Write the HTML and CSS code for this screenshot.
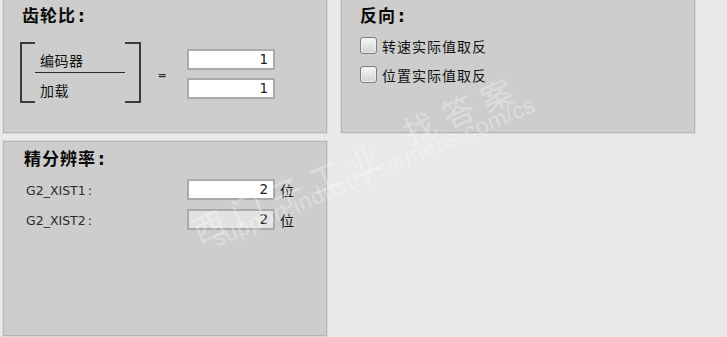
FILE: index.html
```html
<!DOCTYPE html>
<html lang="zh-CN">
<head>
<meta charset="utf-8">
<title>齿轮比</title>
<link rel="stylesheet" href="styles.css">
</head>
<body>
<div class="page">
  <section class="panel panel-top gear">
    <div class="title">齿轮比<span class="colon">:</span></div>
    <div class="ratio">
      <div class="br br-left"></div>
      <div class="frac">
        <div class="num-label">编码器</div>
        <div class="frac-line"></div>
        <div class="den-label">加载</div>
      </div>
      <div class="br br-right"></div>
      <div class="eq">=</div>
      <div class="fields">
        <div class="field">1</div>
        <div class="field">1</div>
      </div>
    </div>
  </section>

  <section class="panel panel-top invert">
    <div class="title">反向<span class="colon">:</span></div>
    <div class="checks">
      <label class="check"><span class="box"></span><span class="check-text">转速实际值取反</span></label>
      <label class="check"><span class="box"></span><span class="check-text">位置实际值取反</span></label>
    </div>
  </section>

  <section class="panel fine">
    <div class="title">精分辨率<span class="colon">:</span></div>
    <div class="rows">
      <div class="row">
        <span class="row-label">G2_XIST1<span class="lc">:</span></span>
        <div class="field">2</div>
        <span class="unit">位</span>
      </div>
      <div class="row">
        <span class="row-label">G2_XIST2<span class="lc">:</span></span>
        <div class="field disabled">2</div>
        <span class="unit">位</span>
      </div>
    </div>
  </section>
</div>

<div class="wm" aria-hidden="true">
  <span class="wm-cn wm-a">西门子工业</span>
  <span class="wm-cn wm-b">找答案</span>
  <span class="wm-url">support.industry.siemens.com/cs</span>
</div>
</body>
</html>
```

FILE: styles.css
```css
* { box-sizing: border-box; }

html, body {
  margin: 0;
  padding: 0;
}

body {
  width: 727px;
  height: 337px;
  overflow: hidden;
  position: relative;
  background: #e9e9e9;
  font-family: "Noto Sans CJK SC", "DejaVu Sans", sans-serif;
  color: #111;
}

.page {
  display: grid;
  grid-template-columns: 324px 354px;
  grid-template-rows: 133px 195px;
  column-gap: 14px;
  row-gap: 8px;
  padding-left: 3px;
}

.panel {
  background: #cdcdcd;
  border: 1px solid #b5b5b5;
  box-shadow: 0 0 0 1px #dadada;
}

.panel-top {
  border-top: none;
}

.title {
  font-size: 17px;
  font-weight: bold;
  line-height: 22px;
  letter-spacing: 1px;
  color: #0a0a0a;
  padding-left: 2px;
}

.colon {
  font-family: "DejaVu Sans", sans-serif;
  margin-left: 2px;
}

/* gear ratio panel */
.gear {
  padding: 4px 0 0 16px;
}

.ratio {
  display: flex;
  align-items: flex-start;
  margin-top: 15px;
}

.br {
  width: 15px;
  height: 61px;
  border: 2px solid #3c3c3c;
}

.br-left { border-right: none; }
.br-right { border-left: none; width: 16px; }

.frac {
  width: 90px;
  display: flex;
  flex-direction: column;
  font-size: 14px;
  line-height: 20px;
  letter-spacing: 0.5px;
}

.num-label {
  height: 30px;
  padding: 8px 0 0 5px;
}

.frac-line {
  height: 1px;
  background: #2a2a2a;
}

.den-label {
  padding: 7px 0 0 5px;
}

.eq {
  width: 14px;
  margin-left: 14px;
  align-self: center;
  margin-top: 5px;
  text-align: center;
  font-family: "DejaVu Sans", sans-serif;
  font-size: 11px;
  font-weight: bold;
  color: #333;
}

.fields {
  display: flex;
  flex-direction: column;
  gap: 8px;
  margin-left: 18px;
  margin-top: 7px;
}

.field {
  width: 88px;
  height: 21px;
  background: #fff;
  border: 2px solid #aaaaaa;
  text-align: right;
  padding-right: 5px;
  font-family: "DejaVu Sans", sans-serif;
  font-size: 13.5px;
  line-height: 17px;
  color: #222;
}

.field.disabled {
  background: #e2e2e2;
}

/* invert panel */
.invert {
  padding: 4px 0 0 16px;
}

.checks {
  display: flex;
  flex-direction: column;
  gap: 12px;
  margin-top: 10px;
  padding-left: 2px;
}

.check {
  display: flex;
  align-items: center;
  height: 17px;
  font-size: 14px;
  letter-spacing: 1px;
}

.box {
  width: 17px;
  height: 17px;
  border: 1px solid #7d7d7d;
  border-radius: 3px;
  background: linear-gradient(#f7f7f7, #d2d2d2);
  box-shadow: inset 0 0 0 1px #ededed;
  margin-right: 5px;
}

.check-text {
  line-height: 20px;
}

/* fine resolution panel */
.fine {
  padding: 5px 0 0 18px;
}

.rows {
  display: flex;
  flex-direction: column;
  gap: 9px;
  margin-top: 9px;
  padding-left: 4px;
}

.row {
  display: flex;
  align-items: center;
}

.row-label {
  width: 161px;
  font-family: "DejaVu Sans", sans-serif;
  font-size: 12.5px;
  color: #2c2c2c;
  padding-top: 2px;
}

.lc {
  margin-left: 2px;
}

.unit {
  margin-left: 5px;
  font-size: 14px;
}

/* watermark */
.wm {
  position: absolute;
  inset: 0;
  pointer-events: none;
  overflow: hidden;
}

.wm span {
  position: absolute;
  white-space: nowrap;
  color: rgba(255, 255, 255, 0.32);
  transform: translate(-50%, -50%) rotate(-23deg);
}

.wm-cn {
  font-family: "Noto Sans CJK SC", sans-serif;
  font-size: 32px;
  letter-spacing: 10px;
}

.wm-a {
  left: 290px;
  top: 190px;
}

.wm-b {
  left: 462px;
  top: 108px;
}

.wm-url {
  left: 374px;
  top: 172px;
  font-family: "Liberation Sans", sans-serif;
  font-size: 23px;
  letter-spacing: 0.5px;
}
```
